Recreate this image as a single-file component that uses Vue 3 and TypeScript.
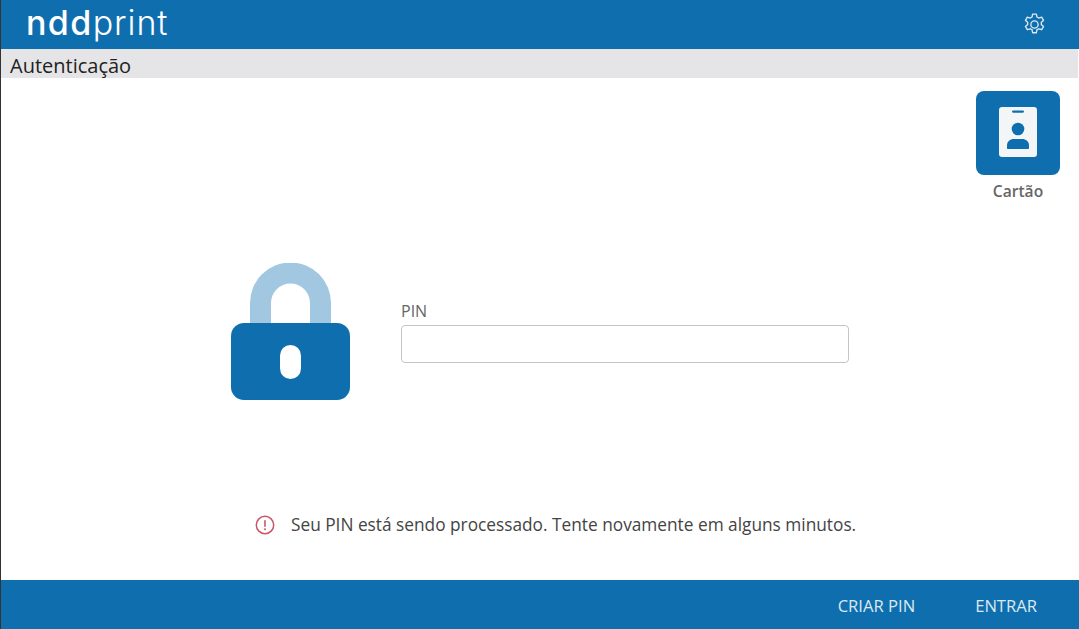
<script setup lang="ts">
const message = "Seu PIN está sendo processado. Tente novamente em alguns minutos.";
</script>

<template>
  <div class="app">
    <header class="topbar">
      <span class="logo"><b>ndd</b>print</span>
      <svg class="gear" viewBox="0 0 24 24" fill="none" stroke="#dce9f3" stroke-width="1.3" stroke-linejoin="round">
        <path d="M10.2 2h3.6l.6 2.900c.6.2 1.200.5 1.700.9l2.800-.9 1.800 3.100-2.200 2c.1.6.1 1.300 0 1.900l2.200 2-1.800 3.100-2.800-.9c-.5.4-1.100.7-1.700.9l-.6 2.900h-3.600l-.6-2.900c-.6-.2-1.200-.5-1.700-.9l-2.800.9-1.800-3.100 2.200-2c-.1-.6-.1-1.300 0-1.900l-2.200-2 1.800-3.100 2.800.9c.5-.4 1.100-.7 1.700-.9z" />
        <circle cx="12" cy="12" r="3.500" />
      </svg>
    </header>
    <div class="titlebar">Autenticação</div>

    <main class="content">
      <div class="methods">
        <div class="method">
          <div class="tile">
            <svg viewBox="0 0 38 50" width="38" height="50">
              <rect width="38" height="50" rx="3" fill="#f4f5f6" />
              <rect x="13" y="3.500" width="12" height="2.200" rx="1.100" fill="#0f6fae" />
              <circle cx="19" cy="22" r="6.300" fill="#0f6fae" />
              <path d="M8 41v-2.500c0-4 3-6.500 7-6.500h8c4 0 7 2.500 7 6.500v2.500c0 .6-.4 1-1 1H9c-.6 0-1-.4-1-1z" fill="#0f6fae" />
            </svg>
          </div>
          <span class="method-label">Cartão</span>
        </div>
      </div>

      <div class="form-row">
        <svg class="lock" viewBox="0 0 119 137" width="119" height="137">
          <path d="M19 62V40a40 40 0 0 1 81 0v22H79V40a19.500 19.500 0 0 0-39 0v22z" fill="#a2c8e1" />
          <rect y="60" width="119" height="77" rx="13" fill="#0f6fae" />
          <rect x="49" y="82" width="21" height="34" rx="10.500" fill="#fff" />
        </svg>
        <div class="field">
          <label class="field-label" for="pin">PIN</label>
          <input id="pin" class="field-input" type="password" />
        </div>
      </div>

      <div class="message">
        <svg viewBox="0 0 20 20" width="20" height="20" fill="none">
          <circle cx="10" cy="10" r="8.700" stroke="#c8566a" stroke-width="1.500" />
          <rect x="9.200" y="5" width="1.600" height="7" rx=".8" fill="#c8566a" />
          <circle cx="10" cy="14.300" r="1" fill="#c8566a" />
        </svg>
        <span>{{ message }}</span>
      </div>
    </main>

    <footer class="footer">
      <button class="action">CRIAR PIN</button>
      <button class="action">ENTRAR</button>
    </footer>
  </div>
</template>

<style scoped>
.app {
  width: 1079px;
  height: 629px;
  display: flex;
  flex-direction: column;
  background: #fff;
  border-left: 1px solid #333;
  box-sizing: border-box;
  font-family: "Open Sans", "Noto Sans", sans-serif;
  overflow: hidden;
}
.topbar {
  height: 49px;
  flex: none;
  margin-left: -1px;
  background: #0f6fae;
  display: flex;
  align-items: center;
  justify-content: space-between;
  padding: 0 32px 0 26px;
}
.logo {
  font-family: Inter, Lato, sans-serif;
  font-size: 34px;
  font-weight: 300;
  line-height: 49px;
  letter-spacing: 0.9px;
  color: #fff;
  margin-top: -4px;
}
.logo b {
  font-weight: 500;
  letter-spacing: 1.400px;
}
.gear {
  width: 25px;
  height: 25px;
}
.titlebar {
  height: 29px;
  flex: none;
  margin-right: 1px;
  background: #e5e5e7;
  padding-left: 9px;
  font-size: 20px;
  line-height: 33px;
  color: #222;
}
.content {
  flex: 1;
  min-height: 0;
  display: flex;
  flex-direction: column;
}
.methods {
  display: flex;
  justify-content: flex-end;
  padding: 13px 19px 0 0;
}
.method {
  display: flex;
  flex-direction: column;
  align-items: center;
  gap: 6px;
}
.tile {
  width: 84px;
  height: 84px;
  box-sizing: border-box;
  padding-bottom: 2px;
  border-radius: 8px;
  background: #0f6fae;
  display: flex;
  align-items: center;
  justify-content: center;
}
.method-label {
  font-size: 15.600px;
  font-weight: 600;
  line-height: 21px;
  color: #666;
}
.form-row {
  display: flex;
  align-items: flex-start;
  padding: 61px 0 0 230px;
}
.lock {
  flex: none;
}
.field {
  width: 447.500px;
  margin: 38px 0 0 51px;
  display: flex;
  flex-direction: column;
  gap: 3px;
}
.field-label {
  font-size: 16px;
  line-height: 21px;
  color: #666;
}
.field-input {
  height: 38px;
  box-sizing: border-box;
  border: 1.500px solid #c4c4c4;
  border-radius: 4px;
  background: #fff;
  outline: none;
}
.message {
  display: flex;
  align-items: center;
  gap: 16px;
  padding: 114px 0 0 254px;
  font-size: 17.280px;
  line-height: 22px;
  color: #444;
}
.footer {
  height: 49px;
  flex: none;
  margin-left: -1px;
  background: #0f6fae;
  display: flex;
  align-items: center;
  justify-content: flex-end;
  gap: 60px;
  padding: 2px 42px 0 0;
  box-sizing: border-box;
}
.action {
  border: 0;
  padding: 0;
  background: none;
  font-family: inherit;
  font-size: 16.600px;
  color: #dce9f3;
}
</style>

<style>
html,
body {
  margin: 0;
  overflow: hidden;
}
</style>
